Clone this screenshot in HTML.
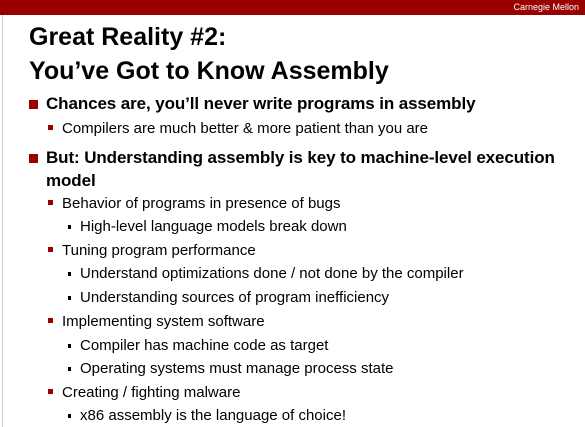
<!DOCTYPE html>
<html><head><meta charset="utf-8"><style>
body{margin:0;width:585px;height:427px;overflow:hidden;background:#fff;font-family:"Liberation Sans",sans-serif;color:#000;position:relative}
.bar{position:absolute;left:0;top:0;width:585px;height:15px;background:#990000}
.cm{position:absolute;right:6px;top:2px;font-size:9px;color:#fff;line-height:11px}
.lb{position:absolute;left:2px;top:15px;width:1px;height:412px;background:#ccc}
.t{position:absolute;left:29px;font-size:25px;font-weight:bold;line-height:28px;white-space:nowrap}
.l{position:absolute;white-space:nowrap;line-height:18px}
.b1{left:46px;font-size:17px;font-weight:bold;letter-spacing:-0.1px}
.b2{left:62px;font-size:15px}
.b3{left:80px;font-size:15px}
.s1{position:absolute;left:29px;width:9px;height:9px;background:#990000}
.s2{position:absolute;left:48px;width:5px;height:5px;background:#990000}
.s3{position:absolute;left:68px;width:3px;height:4px;background:#000}
</style></head><body>
<div class="bar"><div class="cm">Carnegie Mellon</div></div>
<div class="lb"></div>
<div class="t" style="top:23px">Great Reality #2:</div>
<div class="t" style="top:57px">You’ve Got to Know Assembly</div>

<div class="s1" style="top:100px"></div><div class="l b1" style="top:95px">Chances are, you’ll never write programs in assembly</div>
<div class="s2" style="top:125px"></div><div class="l b2" style="top:120px">Compilers are much better &amp; more patient than you are</div>
<div class="s1" style="top:154px"></div><div class="l b1" style="top:149px">But: Understanding assembly is key to machine-level execution</div>
<div class="l b1" style="top:172px">model</div>
<div class="s2" style="top:200px"></div><div class="l b2" style="top:195px">Behavior of programs in presence of bugs</div>
<div class="s3" style="top:225px"></div><div class="l b3" style="top:218px">High-level language models break down</div>
<div class="s2" style="top:247px"></div><div class="l b2" style="top:242px">Tuning program performance</div>
<div class="s3" style="top:272px"></div><div class="l b3" style="top:265px">Understand optimizations done / not done by the compiler</div>
<div class="s3" style="top:296px"></div><div class="l b3" style="top:289px">Understanding sources of program inefficiency</div>
<div class="s2" style="top:318px"></div><div class="l b2" style="top:313px">Implementing system software</div>
<div class="s3" style="top:344px"></div><div class="l b3" style="top:337px">Compiler has machine code as target</div>
<div class="s3" style="top:367px"></div><div class="l b3" style="top:360px">Operating systems must manage process state</div>
<div class="s2" style="top:389px"></div><div class="l b2" style="top:384px">Creating / fighting malware</div>
<div class="s3" style="top:414px"></div><div class="l b3" style="top:407px">x86 assembly is the language of choice!</div>
</body></html>
